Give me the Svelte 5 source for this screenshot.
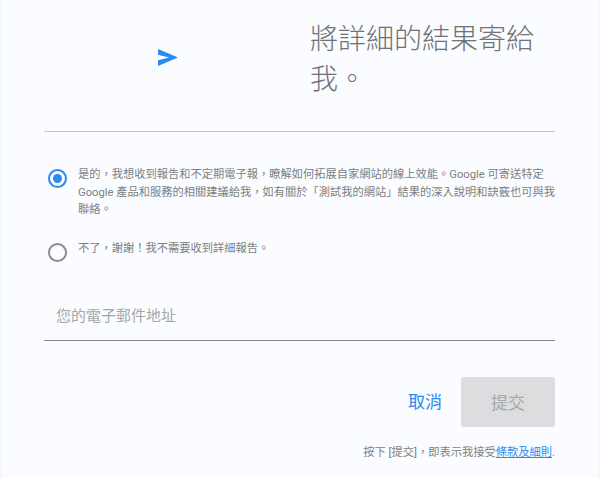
<script>
  let choice = $state('yes');
  let email = $state('');
</script>

<div class="page" lang="zh-Hant-TW">
  <header class="head">
    <div class="icon-col">
      <svg class="send" width="20" height="17" viewBox="0 0 20 17" aria-hidden="true">
        <path d="M0 0 L20 8.5 L0 17 L0 11.2 L11 8.5 L0 5.8 Z" />
      </svg>
    </div>
    <h1>將詳細的結果寄給我。</h1>
  </header>

  <form class="form" onsubmit={(e) => e.preventDefault()}>
    <label class="option first">
      <input type="radio" name="choice" value="yes" bind:group={choice} />
      <span class="radio" class:on={choice === 'yes'}></span>
      <span class="text">是的，我想收到報告和不定期電子報，瞭解如何拓展自家網站的線上效能。Google 可寄送特定 Google 產品和服務的相關建議給我，如有關於「測試我的網站」結果的深入說明和訣竅也可與我聯絡。</span>
    </label>
    <label class="option second">
      <input type="radio" name="choice" value="no" bind:group={choice} />
      <span class="radio" class:on={choice === 'no'}></span>
      <span class="text">不了，謝謝！我不需要收到詳細報告。</span>
    </label>

    <input class="email" type="email" placeholder="您的電子郵件地址" bind:value={email} />

    <div class="actions">
      <button type="button" class="cancel">取消</button>
      <button type="submit" class="submit" disabled>提交</button>
    </div>

    <p class="terms">按下 [提交]，即表示我接受<a href="#terms">條款及細則</a>.</p>
  </form>
</div>

<style>
  :global(body) {
    background: #fafcff;
  }

  .page {
    box-sizing: border-box;
    height: 478px;
    background: #fafcff;
    border-left: 2px solid #f2f8fd;
    border-right: 2px solid #f2f8fd;
    padding-left: 42px;
    padding-right: 43px;
    font-family: Roboto, "Noto Sans CJK TC", sans-serif;
    overflow: hidden;
  }

  .head {
    display: flex;
    height: 131px;
    border-bottom: 1px solid #c4c6ca;
    box-sizing: content-box;
  }

  .icon-col {
    flex: 0 0 266px;
    display: flex;
    justify-content: center;
    padding-top: 49px;
    padding-right: 18px;
    box-sizing: border-box;
  }

  .send {
    display: block;
    fill: #2a8af0;
  }

  h1 {
    margin: 0;
    padding-top: 20px;
    width: 240px;
    font-size: 28px;
    font-weight: 300;
    line-height: 40px;
    color: #6f7276;
  }

  .form {
    display: flex;
    flex-direction: column;
  }

  .option {
    display: flex;
    align-items: flex-start;
    gap: 11px;
    padding-left: 4px;
    cursor: pointer;
  }

  .first {
    margin-top: 36px;
  }

  .second {
    margin-top: 23px;
  }

  .option input {
    display: none;
  }

  .radio {
    flex: 0 0 auto;
    box-sizing: border-box;
    width: 19px;
    height: 19px;
    margin-top: 1px;
    border: 2px solid #8b8c8e;
    border-radius: 50%;
    position: relative;
  }

  .radio.on {
    border-color: #2a8af0;
  }

  .radio.on::after {
    content: '';
    position: absolute;
    inset: 3px;
    border-radius: 50%;
    background: #2a8af0;
  }

  .text {
    font-size: 11.25px;
    line-height: 17.5px;
    color: #7c7f83;
    margin-top: -2px;
    margin-right: -3px;
  }

  .email {
    box-sizing: border-box;
    height: 44px;
    margin-top: 35px;
    padding: 0 12px 4px;
    border: 0;
    border-bottom: 1px solid #85878a;
    background: transparent;
    font: inherit;
    font-size: 15px;
    color: #444;
    outline: none;
  }

  .email::placeholder {
    color: #a4a6a9;
    opacity: 1;
  }

  .actions {
    display: flex;
    justify-content: flex-end;
    align-items: center;
    gap: 19px;
    margin-top: 36px;
  }

  button {
    border: 0;
    padding: 0;
    font: inherit;
    font-size: 17px;
    background: none;
  }

  .cancel {
    color: #2a8af0;
    cursor: pointer;
    margin-top: -2px;
  }

  .submit {
    width: 94px;
    height: 50px;
    border-radius: 3px;
    background: #dcddde;
    color: #a7a8aa;
  }

  .terms {
    margin: 18px 0 0;
    text-align: right;
    font-size: 11.25px;
    line-height: 16px;
    color: #7c7f83;
  }

  .terms a {
    color: #2a8af0;
  }
</style>
